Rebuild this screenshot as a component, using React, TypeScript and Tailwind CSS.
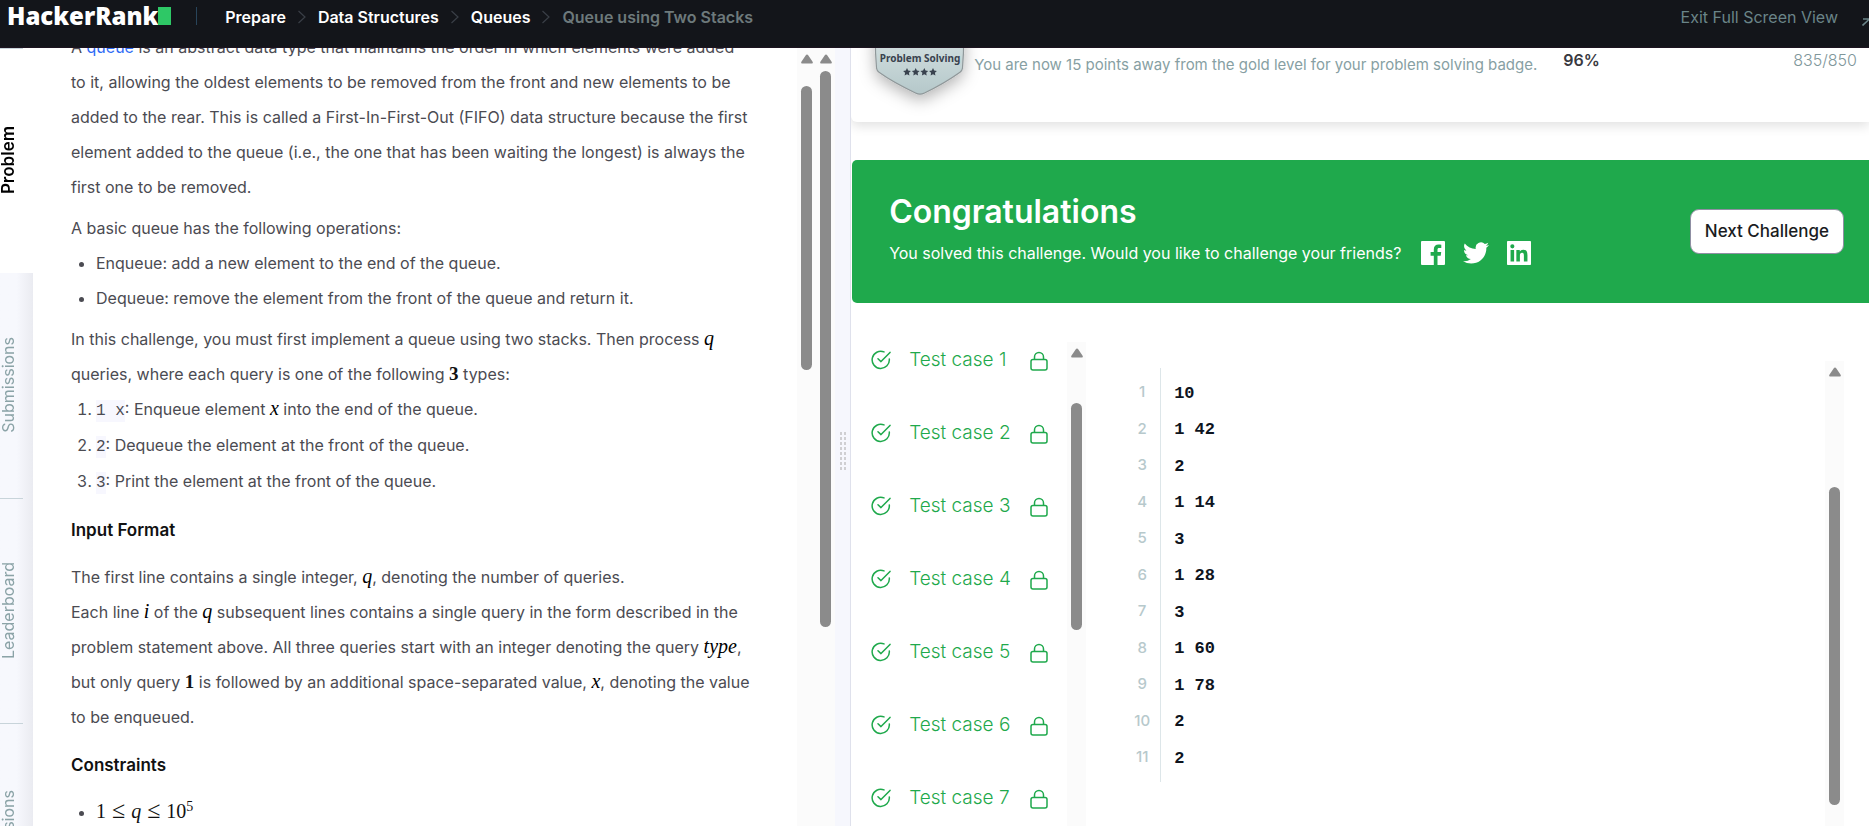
import type { ReactNode } from "react";

const SANS = "font-['Inter','Liberation_Sans',sans-serif]";

function Chevron() {
  return (
    <svg className="mx-2 h-4 w-4 shrink-0 text-[#3a3f47]" viewBox="0 0 16 16" fill="none" stroke="currentColor" strokeWidth="1.2" aria-hidden="true">
      <path d="M4.500 2l6.500 6-6.500 6" />
    </svg>
  );
}

function ArrowUp() {
  return (
    <svg className="h-[10px] w-[12px] shrink-0 text-[#8b8b8b]" viewBox="0 0 12 10" aria-hidden="true">
      <path d="M6 .5c.5 0 .9.3 1.2.8l4.400 6.500c.5.8.1 1.700-.8 1.700H1.200c-.9 0-1.300-.9-.8-1.700l4.400-6.500C5.100.8 5.500.5 6 .5z" fill="currentColor" />
    </svg>
  );
}

function Scrollbar({ before, thumb }: { before: string; thumb: string }) {
  return (
    <div className="flex w-[19px] shrink-0 flex-col items-center overflow-hidden bg-[#fbfbfb] pt-[6px]">
      <ArrowUp />
      <div className={`shrink-0 ${before}`} />
      <div className={`w-[11px] shrink-0 rounded-full bg-[#8b8b8b] ${thumb}`} />
    </div>
  );
}

function M({ children }: { children: ReactNode }) {
  return <i className="font-['Liberation_Serif',serif] text-[20px] leading-none font-normal text-black">{children}</i>;
}

function N({ children }: { children: ReactNode }) {
  return <b className="font-['Liberation_Serif',serif] text-[19px] leading-none font-bold text-[#111]">{children}</b>;
}

function Code({ children }: { children: ReactNode }) {
  return <code className="bg-[#f7f7fe] py-[2px] font-['Liberation_Mono',monospace] text-[16px] leading-none">{children}</code>;
}

const tabs = ["Problem", "Submissions", "Leaderboard", "Discussions"];

function SideTabs() {
  return (
    <nav className="flex w-[33px] shrink-0 flex-col overflow-hidden bg-linear-to-r from-[#f7f8fd] from-50% to-[#eaebf1]">
      {tabs.map((tab, i) => (
        <a
          key={tab}
          href="#"
          className={
            i === 0
              ? "flex h-[225px] shrink-0 flex-col bg-white text-[17px] font-semibold text-black"
              : "flex h-[225px] shrink-0 flex-col text-[16px] text-[#8ba3a7]"
          }
        >
          <span className={`h-px w-[23px] ${i === 1 ? "bg-transparent" : "bg-[#c8d4da]"}`} />
          <span className="flex w-4 flex-1 items-center justify-center pb-[2px]">
            <span className="rotate-180 leading-4 [writing-mode:vertical-rl]">{tab}</span>
          </span>
        </a>
      ))}
    </nav>
  );
}

function Statement() {
  return (
    <article className="min-w-0 flex-1 overflow-hidden bg-white pl-[38px] text-[16px] leading-[35px] font-normal whitespace-nowrap text-[#4b4b52]">
      <p className="-mt-[18px] mb-[6px]">
        A <a href="#" className="text-[#2f6bf5]">queue</a> is an abstract data type that maintains the order in which elements were added
        <br />
        to it, allowing the oldest elements to be removed from the front and new elements to be
        <br />
        added to the rear. This is called a First-In-First-Out (FIFO) data structure because the first
        <br />
        element added to the queue (i.e., the one that has been waiting the longest) is always the
        <br />
        first one to be removed.
      </p>
      <p>A basic queue has the following operations:</p>
      <ul className="mb-[6px] list-disc pl-[25px]">
        <li>Enqueue: add a new element to the end of the queue.</li>
        <li>Dequeue: remove the element from the front of the queue and return it.</li>
      </ul>
      <p>
        In this challenge, you must first implement a queue using two stacks. Then process <M>q</M>
        <br />
        queries, where each query is one of the following <N>3</N> types:
      </p>
      <ol className="list-decimal pl-[25px]">
        <li className="h-9"><Code>1 x</Code>: Enqueue element <M>x</M> into the end of the queue.</li>
        <li className="h-9"><Code>2</Code>: Dequeue the element at the front of the queue.</li>
        <li className="h-9"><Code>3</Code>: Print the element at the front of the queue.</li>
      </ol>
      <h3 className="mt-[13px] mb-3 text-[17px] font-semibold text-[#111]">Input Format</h3>
      <p>
        The first line contains a single integer, <M>q</M>, denoting the number of queries.
        <br />
        Each line <M>i</M> of the <M>q</M> subsequent lines contains a single query in the form described in the
        <br />
        problem statement above. All three queries start with an integer denoting the query <M>type</M>,
        <br />
        but only query <N>1</N> is followed by an additional space-separated value, <M>x</M>, denoting the value
        <br />
        to be enqueued.
      </p>
      <h3 className="mt-[13px] mb-3 text-[17px] font-semibold text-[#111]">Constraints</h3>
      <ul className="list-disc pl-[25px]">
        <li>
          <span className="font-['Liberation_Serif',serif] text-[20px] leading-none text-[#111]">
            1<span className="mx-[6px] text-[24px]">≤</span>
            <i>q</i>
            <span className="mx-[6px] text-[24px]">≤</span>10<sup className="text-[14px]">5</sup>
          </span>
        </li>
      </ul>
    </article>
  );
}

function Splitter() {
  return (
    <div className="flex w-[16px] shrink-0 items-center justify-center border-r border-[#dfe1ec] bg-[#f6f7fd]">
      <svg className="mb-[-28px] h-[40px] w-[6px] text-[#cfcfd2]" viewBox="0 0 6 40" fill="currentColor" aria-hidden="true">
        {[0, 1, 2, 3, 4, 5, 6, 7].map((r) => (
          <g key={r}>
            <rect x="0" y={r * 5 + 1} width="2" height="3" />
            <rect x="4" y={r * 5 + 1} width="2" height="3" />
          </g>
        ))}
      </svg>
    </div>
  );
}

function Badge() {
  return (
    <svg className="-mt-10 h-[130px] w-[110px] shrink-0 overflow-visible" viewBox="0 0 110 130" role="img" aria-label="Problem Solving badge">
      <defs>
        <linearGradient id="silver" x1="0" y1="0" x2="0" y2="1">
          <stop offset="0" stopColor="#e3ecec" />
          <stop offset="1" stopColor="#b5c8ca" />
        </linearGradient>
        <filter id="drop" x="-50%" y="-50%" width="200%" height="200%">
          <feDropShadow dx="0" dy="5" stdDeviation="8" floodColor="#000" floodOpacity="0.3" />
        </filter>
      </defs>
      <path
        d="M11 0H98c1 20 .8 45-.5 60-.2 2-1 3.200-2.500 4.300C85 71.500 70 80 59.500 85c-3 1.600-6 1.600-9 0C40 80 24 71.500 14 64.300c-1.500-1.100-2.300-2.300-2.500-4.300C10.200 45 10 20 11 0z"
        fill="url(#silver)"
        stroke="#8f9799"
        strokeWidth="1.2"
        filter="url(#drop)"
      />
      <text x="55" y="54" textAnchor="middle" className="fill-[#39424e] font-['Noto_Sans','Open_Sans',sans-serif] text-[10px] font-bold">
        Problem Solving
      </text>
      {[42, 50.700, 59.300, 68].map((x) => (
        <path
          key={x}
          transform={`translate(${x} 64)`}
          d="M0-3.900l1.200 2.500 2.700.3-2 1.900.5 2.700L0 2.200l-2.400 1.300.5-2.700-2-1.900 2.700-.3z"
          fill="#39424e"
        />
      ))}
    </svg>
  );
}

function Progress() {
  return (
    <section className="flex h-[74px] shrink-0 items-start rounded-bl-md bg-white pr-[12px] pl-[14px] shadow-[0_4px_12px_rgba(0,0,0,0.12)]">
      <Badge />
      <p className="ml-[-1px] pt-[7px] text-[15px] leading-5 whitespace-nowrap text-[#879fa3]">
        You are now 15 points away from the gold level for your problem solving badge.
      </p>
      <div className="ml-[26px] flex flex-1 justify-between pt-[2px] text-[16px] leading-5">
        <span className="font-semibold text-[#39393f]">96%</span>
        <span className="font-light text-[#7f979b]">835/850</span>
      </div>
    </section>
  );
}

function Banner() {
  return (
    <section className="mt-[38px] ml-px flex h-[143px] shrink-0 items-center justify-between rounded-l-[5px] bg-[#1fa94c] pr-[25px] pl-[37px] text-white">
      <div className="pb-[6px]">
        <h2 className="text-[32px] leading-10 font-semibold">Congratulations</h2>
        <div className="mt-2 flex items-center">
          <p className="text-[16px] leading-6 whitespace-nowrap">You solved this challenge. Would you like to challenge your friends?</p>
          <a href="#" aria-label="Share on Facebook" className="ml-5">
            <svg className="h-6 w-6" viewBox="0 0 24 24" fill="currentColor">
              <path d="M1 0h22a1 1 0 0 1 1 1v22a1 1 0 0 1-1 1h-6.500v-9.300h3.200l.5-3.600h-3.700V8.800c0-1 .4-1.700 1.800-1.700h2V3.800c-.4-.1-1.500-.2-2.800-.2-2.800 0-4.700 1.700-4.700 4.800v2.700H9.600v3.600h3.200V24H1a1 1 0 0 1-1-1V1a1 1 0 0 1 1-1z" />
            </svg>
          </a>
          <a href="#" aria-label="Share on Twitter" className="ml-[18px]">
            <svg className="h-[26px] w-[26px]" viewBox="0 0 24 24" fill="currentColor">
              <path d="M23.950 4.570a10 10 0 0 1-2.820.77 4.960 4.960 0 0 0 2.160-2.720c-.95.560-2 .96-3.130 1.180a4.920 4.920 0 0 0-8.380 4.480C7.690 8.100 4.070 6.130 1.640 3.160a4.900 4.900 0 0 0-.67 2.480c0 1.710.87 3.210 2.190 4.100a4.900 4.900 0 0 1-2.230-.62v.06a4.920 4.920 0 0 0 3.950 4.830 5 5 0 0 1-2.210.08 4.940 4.940 0 0 0 4.600 3.420A9.870 9.870 0 0 1 0 19.540a14 14 0 0 0 7.550 2.210c9.050 0 14-7.500 14-13.980 0-.21 0-.42-.02-.63a9.940 9.940 0 0 0 2.460-2.550z" />
            </svg>
          </a>
          <a href="#" aria-label="Share on LinkedIn" className="ml-[18px]">
            <svg className="h-6 w-6" viewBox="0 0 24 24" fill="currentColor">
              <path d="M20.450 20.450h-3.560v-5.570c0-1.330-.02-3.040-1.850-3.040-1.850 0-2.130 1.450-2.130 2.940v5.670H9.350V9h3.420v1.560h.04c.48-.9 1.640-1.850 3.370-1.850 3.600 0 4.270 2.370 4.270 5.460zM5.340 7.430a2.060 2.060 0 1 1 0-4.130 2.060 2.060 0 0 1 0 4.130m1.780 13.020H3.550V9h3.570zM23 0H1C.45 0 0 .45 0 1v22c0 .55.45 1 1 1h22c.55 0 1-.45 1-1V1c0-.55-.45-1-1-1" />
            </svg>
          </a>
        </div>
      </div>
      <button type="button" className="h-[45px] rounded-[9px] border border-[#8f8fa3] bg-white px-[14px] text-[17px] font-medium text-[#1a1c22]">
        Next Challenge
      </button>
    </section>
  );
}

function TestCases() {
  return (
    <ul className="flex w-[216px] shrink-0 flex-col overflow-hidden pl-5 text-[#1fa94c]">
      {[1, 2, 3, 4, 5, 6, 7].map((n) => (
        <li key={n} className="h-[73px] shrink-0">
          <a href="#" className="flex h-9 items-center">
            <svg className="h-5 w-5 shrink-0" viewBox="0 0 20 20" fill="none" stroke="currentColor" strokeWidth="1.500" strokeLinecap="round" strokeLinejoin="round" aria-hidden="true">
              <path d="M13 1.900A8.600 8.600 0 1 0 18.300 9" />
              <path d="M7 8.700l3 2.900 9-9.200" />
            </svg>
            <span className="ml-[18px] w-[121px] text-[19px] leading-6 font-light">Test case {n}</span>
            <svg className="mt-[2px] h-5 w-[18px] shrink-0" viewBox="0 0 18 20" fill="none" stroke="currentColor" strokeWidth="1.500" strokeLinejoin="round" aria-hidden="true">
              <rect x="1" y="8.500" width="16" height="10.500" rx="2" />
              <path d="M4.500 8.500V6a4.500 4.500 0 0 1 9 0v2.500" />
            </svg>
          </a>
        </li>
      ))}
    </ul>
  );
}

const lines = ["10", "1 42", "2", "1 14", "3", "1 28", "3", "1 60", "1 78", "2", "2"];

function InputBlock() {
  return (
    <div className="flex min-w-0 flex-1 justify-between pr-[25px] pl-[38px]">
      <div className="mt-[26px] flex h-[414px]">
        <ol className="grid w-[37px] grid-rows-11 border-r border-[#dde6e9] py-[6px] text-center text-[15px] font-medium text-[#b7c9cc]">
          {lines.map((_, i) => (
            <li key={i} className="flex items-center justify-center">{i + 1}</li>
          ))}
        </ol>
        <ol className="grid grid-rows-11 pt-[7px] pb-[5px] pl-[13px] font-['Liberation_Mono',monospace] text-[17px] font-bold whitespace-pre text-[#0e141e]">
          {lines.map((line, i) => (
            <li key={i} className="flex items-center">{line}</li>
          ))}
        </ol>
      </div>
      <div className="mt-[19px] flex">
        <Scrollbar before="h-[110px]" thumb="h-[318px]" />
      </div>
    </div>
  );
}

function Header() {
  return (
    <header className="flex h-12 shrink-0 items-start overflow-hidden border-b border-[#1d1420] bg-[#13151a] pt-[5px] pl-[7px]">
      <a href="#" className="flex items-center">
        <span className="font-['Open_Sans',sans-serif] text-[24px] leading-[22px] font-extrabold text-white">HackerRank</span>
        <span className="h-[18px] w-[13px] bg-[#2ec866]" />
      </a>
      <span className="mt-[2px] ml-[25px] h-[18px] w-px bg-[#28445a]" />
      <nav className="ml-[28px] flex h-6 items-center text-[16px] font-semibold text-white" aria-label="Breadcrumb">
        <a href="#">Prepare</a>
        <Chevron />
        <a href="#">Data Structures</a>
        <Chevron />
        <a href="#">Queues</a>
        <Chevron />
        <span className="text-[#6d797b]">Queue using Two Stacks</span>
      </nav>
      <button type="button" className="ml-auto flex h-6 items-center text-[16px] text-[#6a8488]">
        Exit Full Screen View
        <svg className="mt-[10px] ml-6 h-2 w-[7px]" viewBox="0 0 7 8" fill="none" stroke="currentColor" strokeWidth="1.600" aria-hidden="true">
          <path d="M1 1h6M.5 7.500L7 1.500" />
        </svg>
      </button>
    </header>
  );
}

export default function App() {
  return (
    <div className={`flex h-screen flex-col overflow-hidden bg-white ${SANS}`}>
      <Header />
      <main className="flex min-h-0 flex-1">
        <div className="flex w-[45.540%] shrink-0">
          <SideTabs />
          <Statement />
          <Scrollbar before="h-[22px]" thumb="h-[284px]" />
          <Scrollbar before="h-[7px]" thumb="h-[556px]" />
          <Splitter />
        </div>
        <div className="flex min-w-0 flex-1 flex-col overflow-hidden">
          <Progress />
          <Banner />
          <div className="mt-[39px] flex min-h-0 flex-1">
            <TestCases />
            <Scrollbar before="h-[45px]" thumb="h-[227px]" />
            <InputBlock />
          </div>
        </div>
      </main>
    </div>
  );
}
